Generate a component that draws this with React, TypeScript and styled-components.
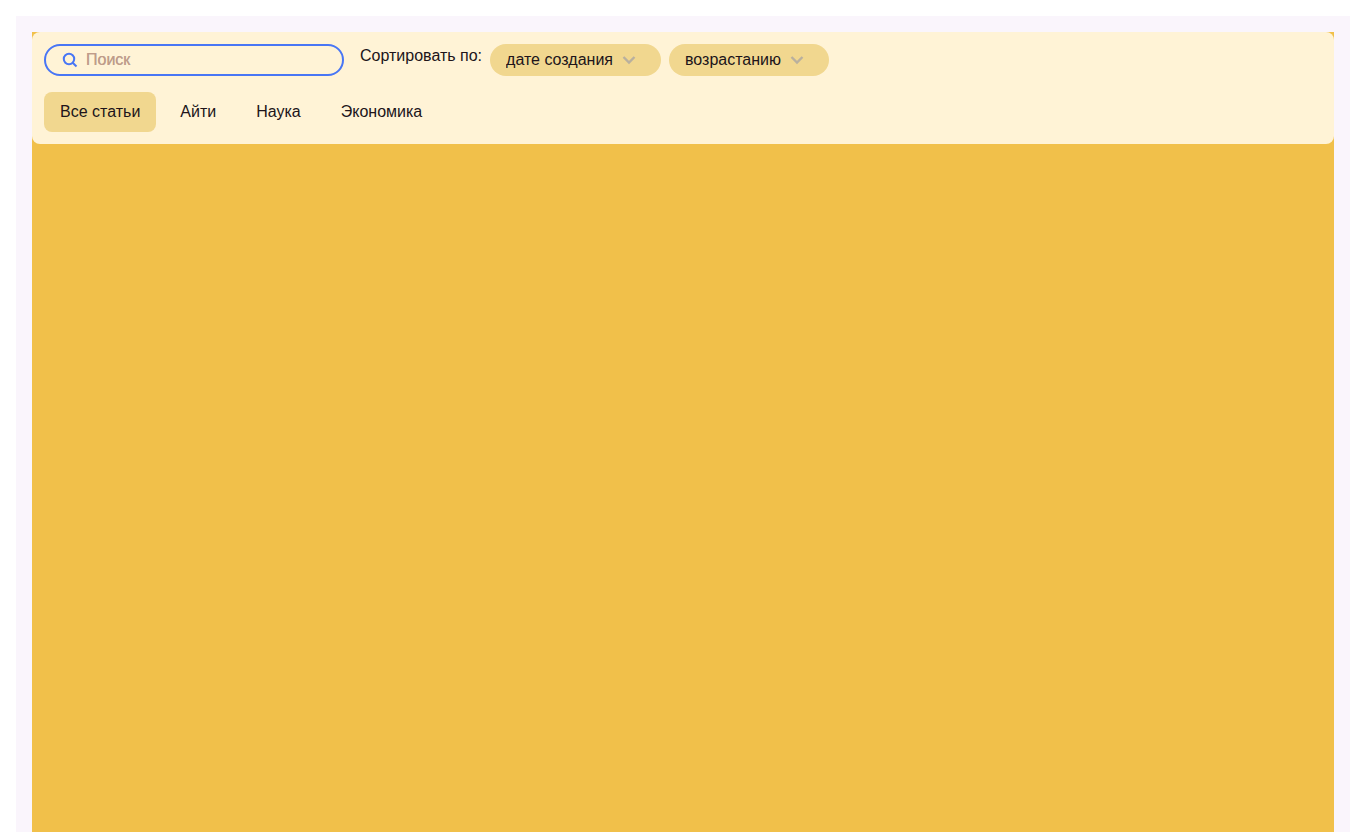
import React, { useState } from "react";
import styled, { createGlobalStyle } from "styled-components";

const colors = {
  page: "#ffffff",
  frame: "#faf5fc",
  content: "#f1c04a",
  panel: "#fff3d6",
  chip: "#f1d78f",
  text: "#20141a",
  accent: "#4876f5",
  hint: "#c19c8a",
  hintShadow: "#b5a490",
  arrow: "#b9b09e",
};

const GlobalStyle = createGlobalStyle`
  *, *::before, *::after { box-sizing: border-box; }
  body {
    margin: 0;
    background: ${colors.page};
    color: ${colors.text};
    font: 16px/24px "Liberation Sans", Arial, sans-serif;
  }
  button, input, select { font: inherit; color: inherit; }
`;

const Page = styled.div`
  display: flex;
  flex-direction: column;
  min-height: 100vh;
  padding: 16px 16px 0;
`;

const Frame = styled.div`
  display: flex;
  flex-direction: column;
  flex: 1;
  padding: 16px 16px 0;
  background: ${colors.frame};
`;

const Content = styled.main`
  flex: 1;
  background: ${colors.content};
`;

const FilterPanel = styled.section`
  display: flex;
  flex-direction: column;
  gap: 16px;
  padding: 12px;
  border-radius: 8px;
  background: ${colors.panel};
`;

const Toolbar = styled.div`
  display: flex;
  flex-wrap: wrap;
  gap: 16px;
`;

const SearchField = styled.label`
  display: flex;
  align-items: center;
  gap: 4px;
  width: 300px;
  height: 32px;
  padding: 0 12px;
  border: 2px solid ${colors.accent};
  border-radius: 16px;
  color: ${colors.accent};
`;

const SearchInput = styled.input`
  flex: 1;
  min-width: 0;
  padding: 0;
  border: 0;
  outline: 0;
  background: transparent;
  color: ${colors.text};

  &::placeholder {
    color: ${colors.hint};
    text-shadow: 0 0 ${colors.hintShadow};
    opacity: 1;
  }
`;

const Icon = styled.svg`
  flex: none;
  width: 24px;
  height: 24px;
  fill: none;
  stroke: currentColor;
  stroke-width: 2;
`;

const SortGroup = styled.div`
  display: flex;
  flex-wrap: wrap;
  gap: 8px;
`;

const SelectShell = styled.span`
  display: inline-grid;
  align-items: center;

  & > * {
    grid-area: 1 / 1;
  }
`;

const Select = styled.select`
  appearance: none;
  height: 32px;
  padding: 0 48px 0 16px;
  border: 0;
  border-radius: 16px;
  background: ${colors.chip};
  cursor: pointer;
`;

const SelectArrow = styled(Icon)`
  justify-self: end;
  margin-right: 20px;
  color: ${colors.arrow};
  pointer-events: none;
`;

const TabList = styled.div`
  display: flex;
  flex-wrap: wrap;
  gap: 8px;
`;

const Tab = styled.button<{ $active: boolean }>`
  padding: 8px 16px;
  border: 0;
  border-radius: 8px;
  background: ${({ $active }) => ($active ? colors.chip : "transparent")};
  cursor: pointer;
`;

const topics = ["Все статьи", "Айти", "Наука", "Экономика"];

type SortSelectProps = {
  id?: string;
  label?: string;
  options: string[];
};

function SortSelect({ id, label, options }: SortSelectProps) {
  return (
    <SelectShell>
      <Select id={id} aria-label={label}>
        {options.map((option) => (
          <option key={option}>{option}</option>
        ))}
      </Select>
      <SelectArrow viewBox="0 0 24 24" aria-hidden="true">
        <path d="M6.5 9 12 14.5 17.5 9" strokeWidth="2.4" />
      </SelectArrow>
    </SelectShell>
  );
}

export default function App() {
  const [query, setQuery] = useState("");
  const [topic, setTopic] = useState(topics[0]);

  return (
    <>
      <GlobalStyle />
      <Page>
        <Frame>
          <Content>
            <FilterPanel>
              <Toolbar>
                <SearchField>
                  <Icon viewBox="0 0 24 24" aria-hidden="true">
                    <circle cx="11" cy="11" r="5.2" />
                    <path d="m14.7 14.7 3.8 3.8" />
                  </Icon>
                  <SearchInput
                    type="text"
                    aria-label="Поиск"
                    placeholder="Поиск"
                    value={query}
                    onChange={(event) => setQuery(event.target.value)}
                  />
                </SearchField>
                <SortGroup>
                  <label htmlFor="sort-field">Сортировать по:</label>
                  <SortSelect
                    id="sort-field"
                    options={["дате создания", "названию"]}
                  />
                  <SortSelect
                    label="Порядок сортировки"
                    options={["возрастанию", "убыванию"]}
                  />
                </SortGroup>
              </Toolbar>
              <TabList role="tablist">
                {topics.map((name) => (
                  <Tab
                    key={name}
                    type="button"
                    role="tab"
                    aria-selected={name === topic}
                    $active={name === topic}
                    onClick={() => setTopic(name)}
                  >
                    {name}
                  </Tab>
                ))}
              </TabList>
            </FilterPanel>
          </Content>
        </Frame>
      </Page>
    </>
  );
}
